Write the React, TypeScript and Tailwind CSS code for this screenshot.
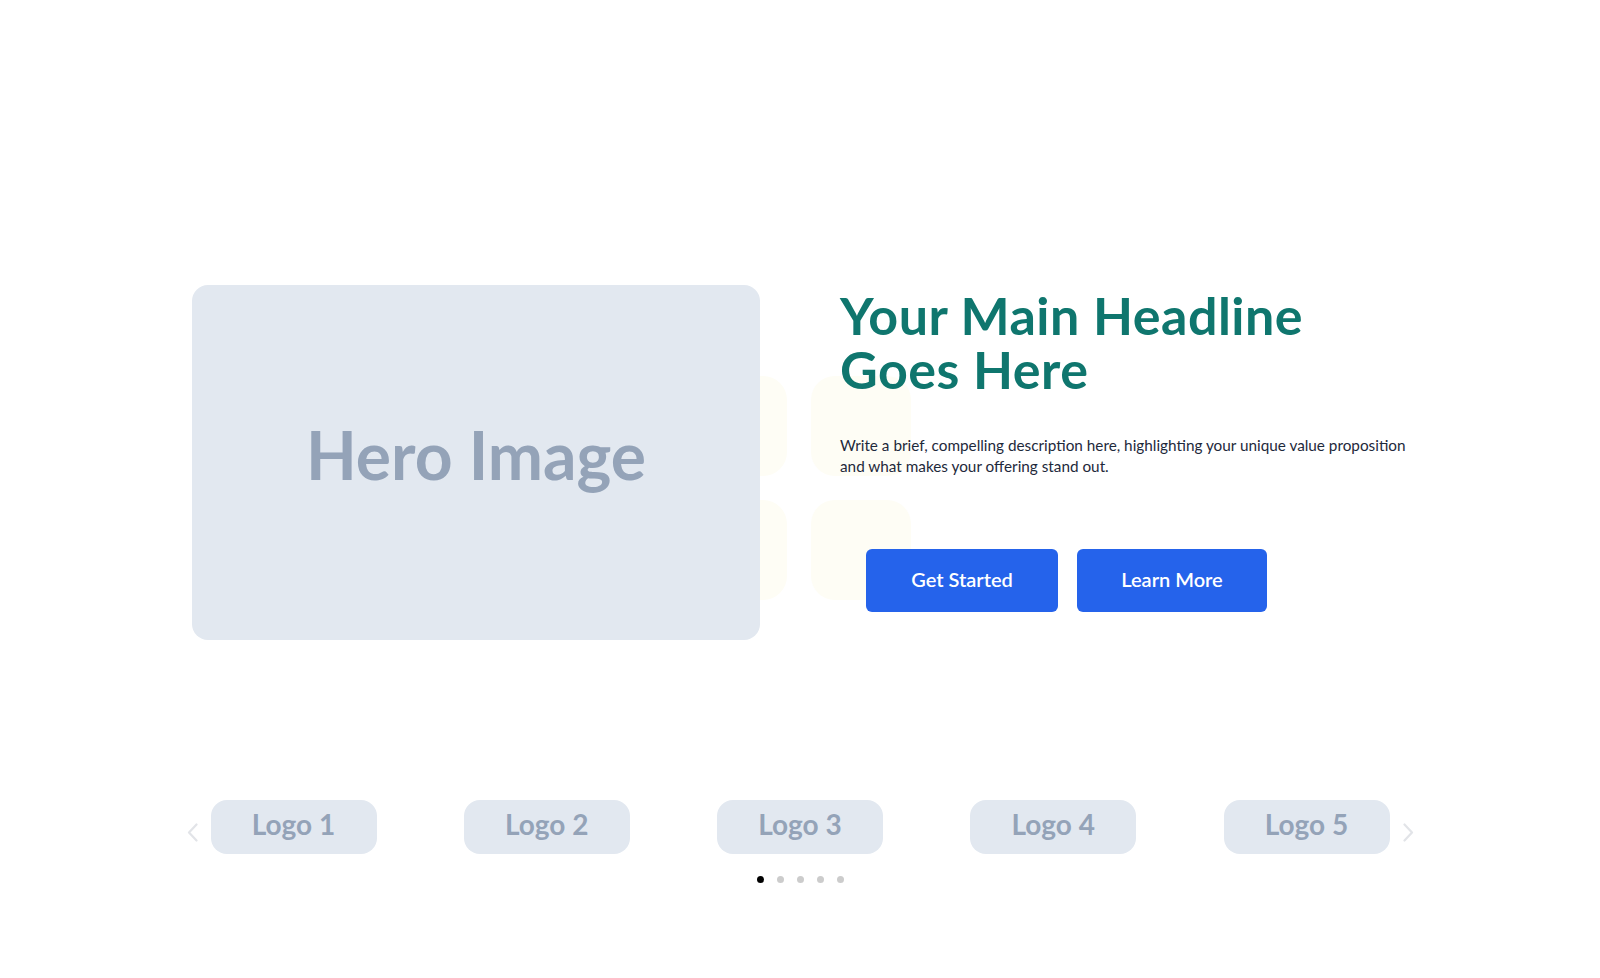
import React from 'react';

const logos = ['Logo 1', 'Logo 2', 'Logo 3', 'Logo 4', 'Logo 5'];

function Chevron({ direction }: { direction: 'left' | 'right' }) {
  return (
    <button type="button" aria-label={direction === 'left' ? 'Previous' : 'Next'} className="flex h-[54px] items-center pt-[10px]">
      <svg width="11" height="19" viewBox="0 0 11 19" fill="none" aria-hidden="true">
        <path
          d={direction === 'left' ? 'M9.5 1.5L2 9.5L9.5 17.5' : 'M1.5 1.5L9 9.5L1.5 17.5'}
          stroke="#e2e4e8"
          strokeWidth="2.2"
          strokeLinecap="round"
          strokeLinejoin="round"
        />
      </svg>
    </button>
  );
}

export default function App() {
  return (
    <main className="min-h-screen bg-white font-['Lato',sans-serif]">
      <section className="pt-[285px]">
        <div className="relative mx-auto grid max-w-7xl grid-cols-2 items-start gap-20 px-8">
          {/* faint tile grid peeking out behind the hero image */}
          <div className="pointer-events-none absolute left-[527px] top-[91px] grid grid-cols-2 gap-6">
            <div className="size-[100px] rounded-3xl bg-[#fefdf5]" />
            <div className="size-[100px] rounded-3xl bg-[#fefdf5]" />
            <div className="size-[100px] rounded-3xl bg-[#fefdf5]" />
            <div className="size-[100px] rounded-3xl bg-[#fefdf5]" />
          </div>

          <div className="relative z-10 flex aspect-[16/10] items-center justify-center rounded-2xl bg-[#e2e8f0] pb-[16px]">
            <span className="text-[66px] font-bold text-[#94a3b8]">Hero Image</span>
          </div>

          <div className="relative z-10">
            <h1 className="mt-[3px] text-[52px] font-bold tracking-[0.5px] text-[#0f766e]">
              <span className="block h-[54px] leading-[54px]">Your Main Headline</span>
              <span className="block h-[54px] leading-[54px]">Goes Here</span>
            </h1>
            <p className="mt-[39px] text-[15.3px] leading-[21px] text-[#1e293b]">
              Write a brief, compelling description here, highlighting your unique value proposition
              <br />
              and what makes your offering stand out.
            </p>
            <div className="ml-[26px] mt-[72px] flex gap-[19px]">
              <button
                type="button"
                className="flex h-[63px] w-[192px] items-center justify-center rounded-md bg-[#2563eb] pb-[4px] text-[20px] font-semibold text-white"
              >
                Get Started
              </button>
              <button
                type="button"
                className="flex h-[63px] w-[190px] items-center justify-center rounded-md bg-[#2563eb] pb-[4px] text-[20px] font-semibold text-white"
              >
                Learn More
              </button>
            </div>
          </div>
        </div>
      </section>

      <section className="mt-[160px] pb-16">
        <div className="flex justify-center gap-[13px]">
          <Chevron direction="left" />
          <div className="flex w-[1179px] justify-between">
            {logos.map((logo) => (
              <div key={logo} className="flex h-[54px] w-[166px] items-center justify-center rounded-2xl bg-[#e2e8f0] pb-[6px]">
                <span className="text-[28px] font-bold text-[#94a3b8]">{logo}</span>
              </div>
            ))}
          </div>
          <Chevron direction="right" />
        </div>
        <div className="mt-[22px] flex justify-center gap-[13px]">
          {logos.map((logo, index) => (
            <span key={logo} className={`size-[7px] rounded-full ${index === 0 ? 'bg-black' : 'bg-[#cccccc]'}`} />
          ))}
        </div>
      </section>
    </main>
  );
}
